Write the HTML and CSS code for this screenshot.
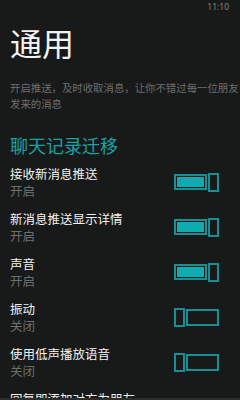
FILE: index.html
```html
<!DOCTYPE html>
<html lang="zh-CN">
<head>
    <meta charset="UTF-8">
    <meta name="viewport" content="width=device-width, initial-scale=1.0">
    <title>通用</title>
    <link rel="stylesheet" href="styles.css">
</head>
<body>
    <div class="status-bar">11:10</div>

    <div class="page">
        <h1 class="page-title">通用</h1>
        <p class="page-desc">开启推送，及时收取消息，让你不错过每一位朋友发来的消息</p>

        <h2 class="section-title">聊天记录迁移</h2>

        <ul class="settings-list">
            <li class="setting-item">
                <div class="setting-text">
                    <div class="setting-label">接收新消息推送</div>
                    <div class="setting-state">开启</div>
                </div>
                <div class="toggle on"><span class="track"><span class="fill"></span></span><span class="thumb"></span></div>
            </li>
            <li class="setting-item">
                <div class="setting-text">
                    <div class="setting-label">新消息推送显示详情</div>
                    <div class="setting-state">开启</div>
                </div>
                <div class="toggle on"><span class="track"><span class="fill"></span></span><span class="thumb"></span></div>
            </li>
            <li class="setting-item">
                <div class="setting-text">
                    <div class="setting-label">声音</div>
                    <div class="setting-state">开启</div>
                </div>
                <div class="toggle on"><span class="track"><span class="fill"></span></span><span class="thumb"></span></div>
            </li>
            <li class="setting-item">
                <div class="setting-text">
                    <div class="setting-label">振动</div>
                    <div class="setting-state">关闭</div>
                </div>
                <div class="toggle off"><span class="thumb"></span><span class="track"></span></div>
            </li>
            <li class="setting-item">
                <div class="setting-text">
                    <div class="setting-label">使用低声播放语音</div>
                    <div class="setting-state">关闭</div>
                </div>
                <div class="toggle off"><span class="thumb"></span><span class="track"></span></div>
            </li>
            <li class="setting-item">
                <div class="setting-text">
                    <div class="setting-label">回复即添加对方为朋友</div>
                    <div class="setting-state">开启</div>
                </div>
                <div class="toggle on"><span class="track"><span class="fill"></span></span><span class="thumb"></span></div>
            </li>
        </ul>
    </div>

    <div class="app-bar"></div>
</body>
</html>
```

FILE: styles.css
```css
:root {
    --bg-color: #171a19;
    --text-color: #f2f2f2;
    --muted-color: #6e6e6e;
    --accent-color: #1ba2a8;
    --toggle-border: #178f94;
    --toggle-fill: #0eacb1;
}

body {
    margin: 0;
    background-color: var(--bg-color);
    color: var(--text-color);
    font-family: "Noto Sans CJK SC", "Noto Sans", sans-serif;
    overflow: hidden;
}

.status-bar {
    height: 14px;
    padding-right: 11px;
    font-family: "Open Sans", sans-serif;
    font-size: 8.5px;
    line-height: 13px;
    text-align: right;
    color: #8a8a8a;
}

.page {
    padding: 0 0 0 10px;
}

.page-title {
    margin: 12px 0 0 0;
    font-size: 32px;
    line-height: 32px;
    font-weight: 400;
}

.page-desc {
    margin: 22px 0 0 0;
    font-size: 10.4px;
    line-height: 16px;
    color: var(--muted-color);
}

.section-title {
    margin: 24px 0 0 0;
    font-size: 18px;
    line-height: 18px;
    font-weight: 400;
    color: var(--accent-color);
}

.settings-list {
    list-style: none;
    margin: 9px 0 0 0;
    padding: 0;
}

.setting-item {
    display: flex;
    align-items: center;
    justify-content: space-between;
    height: 34px;
    padding: 2px 21px 9px 0;
}

.setting-label {
    font-size: 12.5px;
    line-height: 17px;
}

.setting-state {
    font-size: 12.5px;
    line-height: 17px;
    color: var(--muted-color);
}

/* Toggle switch */
.toggle {
    display: flex;
    align-items: center;
    gap: 1px;
    width: 45px;
}

.toggle .track {
    box-sizing: border-box;
    display: flex;
    flex: 1;
    height: 16px;
    padding: 1px;
    border: 2px solid var(--toggle-border);
}

.toggle .fill {
    flex: 1;
    background-color: var(--toggle-fill);
}

.toggle .thumb {
    box-sizing: border-box;
    width: 11px;
    height: 19px;
    border: 2px solid var(--toggle-border);
    background-color: var(--bg-color);
}

.toggle.off .track {
    height: 17px;
}

.app-bar {
    position: fixed;
    left: 0;
    right: 0;
    bottom: 0;
    height: 2px;
    background-color: #2c2c2c;
}
```
